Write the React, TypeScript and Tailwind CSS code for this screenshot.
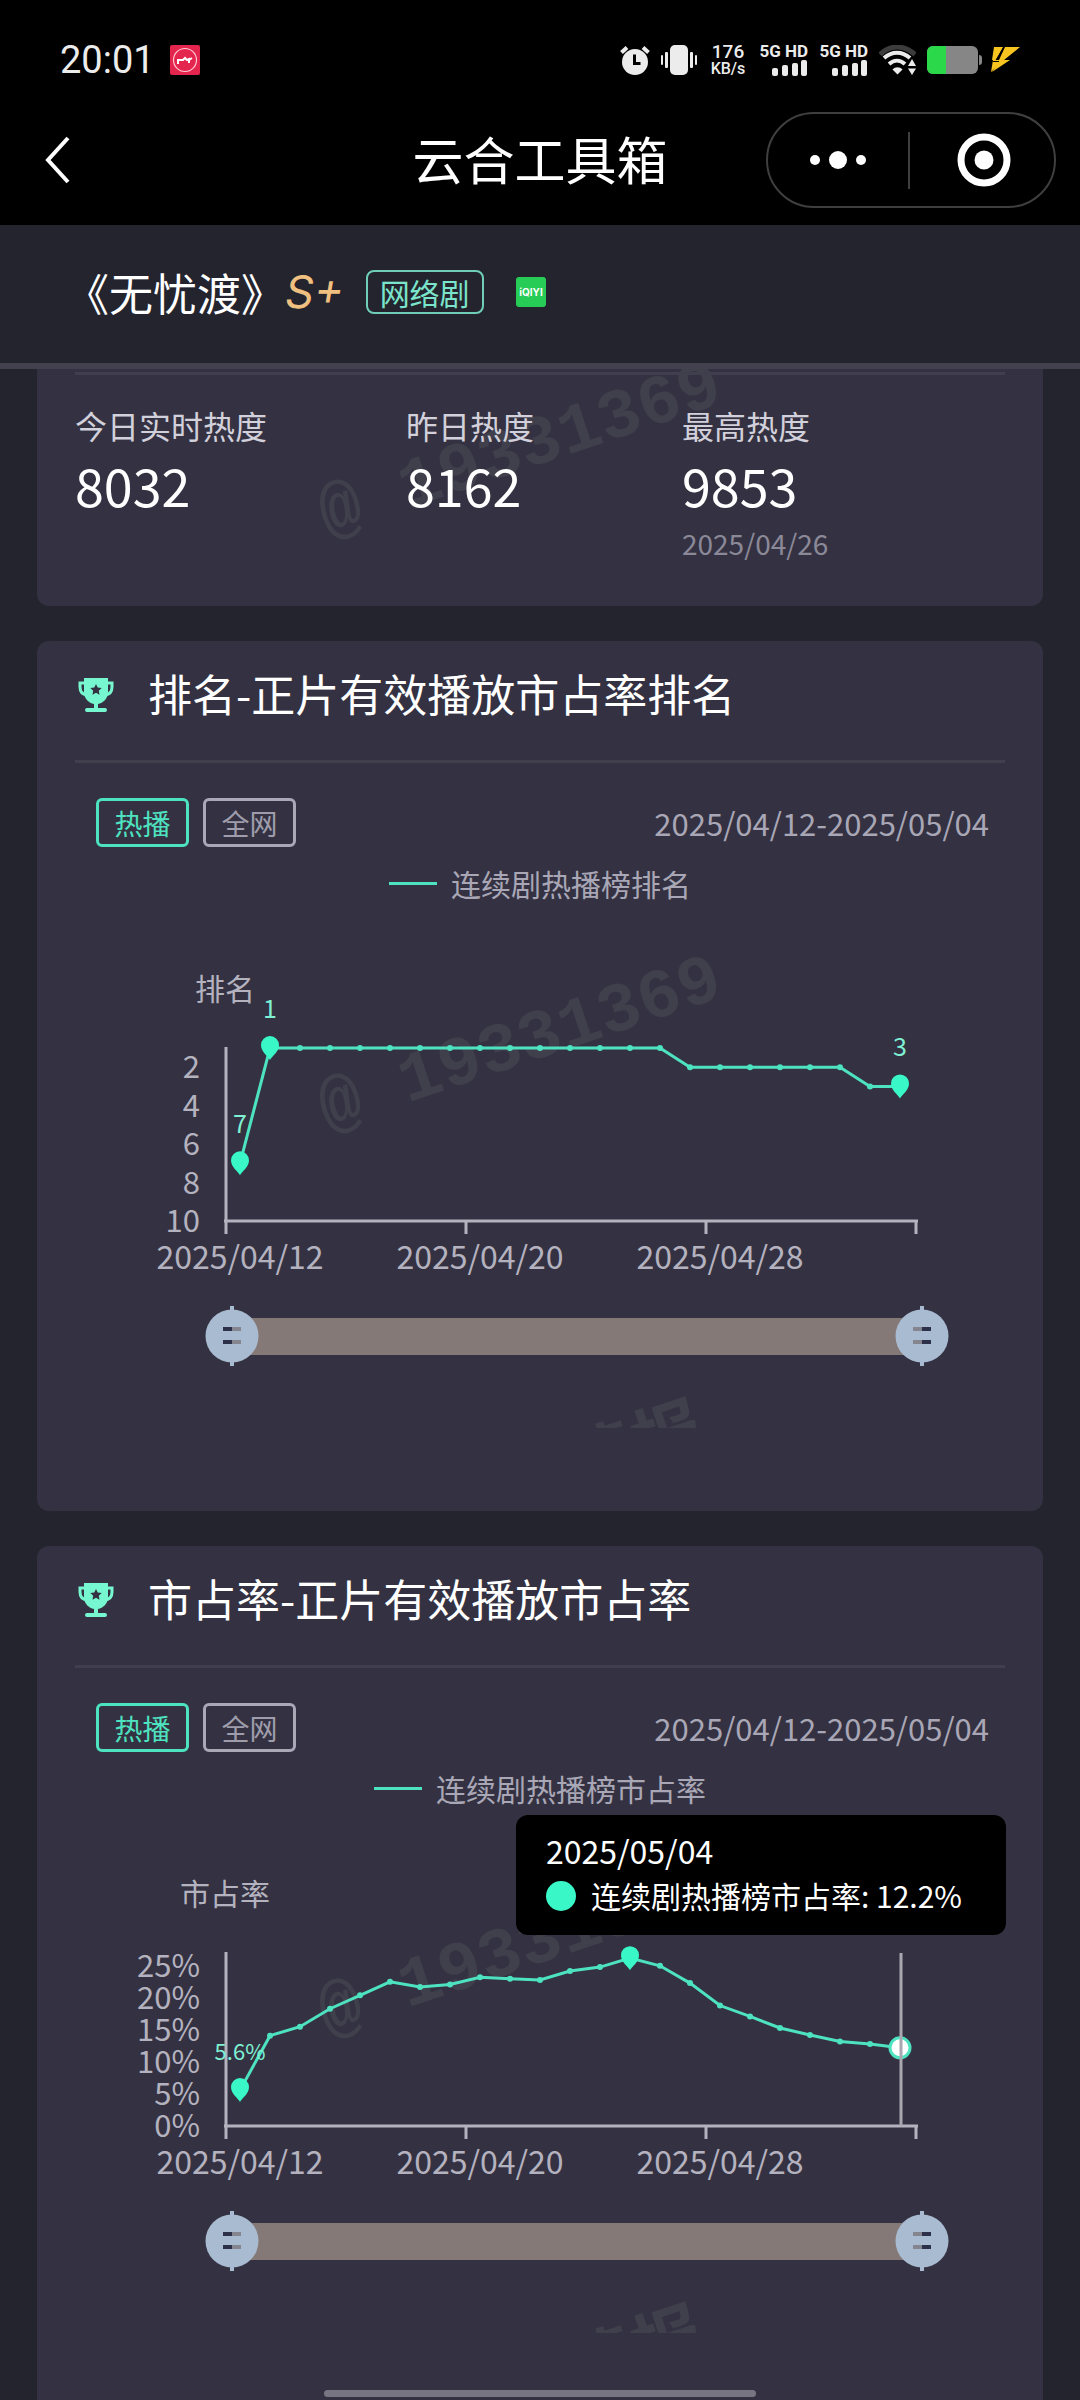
import { clsx } from "clsx";
import type { ReactNode } from "react";

type TPin = {
  index: number;
  label?: string;
};

type TLineChart = {
  name: string;
  unit: string;
  values: number[];
  ticks: { value: number; label: string }[];
  min: number;
  max: number;
  pins: TPin[];
  pinLabelSize: number;
  activeIndex?: number;
};

const SHARE = [
  5.6, 14.1, 15.5, 18.3, 20.4, 22.5, 21.7, 22.1, 23.2, 23, 22.8, 24.2, 24.8,
  26.2, 25, 22.3, 18.8, 17.1, 15.3, 14.2, 13.2, 12.8, 12.2,
];

const RANK = [
  7, 1, 1, 1, 1, 1, 1, 1, 1, 1, 1, 1, 1, 1, 1, 2, 2, 2, 2, 2, 2, 3, 3,
];

const STATS = [
  { label: "今日实时热度", value: "8032" },
  { label: "昨日热度", value: "8162" },
  { label: "最高热度", value: "9853", date: "2025/04/26" },
];

const DATES = [
  { index: 0, label: "2025/04/12" },
  { index: 8, label: "2025/04/20" },
  { index: 16, label: "2025/04/28" },
];

const PLOT = { left: 151, right: 841, top: 142, bottom: 315, step: 30 };

const SignalBars = () => (
  <svg width="36" height="16" viewBox="0 0 36 16" fill="#ececec">
    <rect x="0" y="8" width="6" height="8" rx="2" />
    <rect x="10" y="5" width="6" height="11" rx="2" />
    <rect x="20" y="3" width="6" height="13" rx="2" />
    <rect x="29" y="0" width="6" height="16" rx="2" />
  </svg>
);

const Signal = () => (
  <div className="flex w-[49px] flex-col items-end">
    <span className="text-[17px] leading-[17px] font-bold whitespace-nowrap">
      5G HD
    </span>
    <SignalBars />
  </div>
);

const StatusBar = () => (
  <div className="flex h-[95px] items-center justify-between px-[60px] pt-6 font-['Roboto',sans-serif] text-[#ececec]">
    <div className="flex items-center gap-[15px]">
      <span className="text-[38px] leading-[44px]">20:01</span>
      <svg width="30" height="30" viewBox="0 0 30 30" fill="none">
        <rect width="30" height="30" rx="2" fill="#e4254d" />
        <circle cx="15" cy="15" r="11.5" stroke="#ffc9d4" strokeWidth="1.2" />
        <path
          d="M8 19v-5M8 15h5l2-2 2 2 2-1v4M19 15l3-2"
          stroke="#fff"
          strokeWidth="2"
        />
      </svg>
    </div>
    <div className="flex items-center gap-[11px]">
      <svg width="30" height="30" viewBox="0 0 30 30" fill="none">
        <circle cx="15" cy="17" r="13" fill="#ececec" />
        <path
          d="M1.500 7.500 7 2.500M28.500 7.500 23 2.500"
          stroke="#ececec"
          strokeWidth="4"
        />
        <path d="M14.500 9.500v9h6" stroke="#000" strokeWidth="3" />
      </svg>
      <svg width="36" height="30" viewBox="0 0 36 30" fill="#ececec">
        <rect x="9" y="0" width="18" height="30" rx="5" />
        <rect x="4" y="7" width="3" height="16" rx="1" />
        <rect x="0" y="10" width="2" height="10" rx="1" />
        <rect x="29" y="7" width="3" height="16" rx="1" />
        <rect x="34" y="10" width="2" height="10" rx="1" />
      </svg>
      <div className="flex w-10 flex-col items-center font-medium">
        <span className="text-[19px] leading-[17px]">176</span>
        <span className="text-[16px] leading-[17px]">KB/s</span>
      </div>
      <Signal />
      <Signal />
      <svg width="37" height="30" viewBox="0 0 37 30" fill="none">
        <path
          d="M1 9.500C11-.5 25-.5 36 9.500"
          stroke="#3c3c3c"
          strokeWidth="5"
        />
        <path d="M5 13c8-7 18-7 26 0" stroke="#ececec" strokeWidth="4" />
        <path d="M10 19c5-4.500 11-4.500 16 0" stroke="#ececec" strokeWidth="4" />
        <path d="M13.500 24.500c3-3 7-3 10 0l-5 5z" fill="#ececec" />
        <path d="M33 14l4 7h-8zM33 30l-4-6.500h8z" fill="#ececec" />
      </svg>
      <div className="flex items-center gap-2">
        <svg width="55" height="28" viewBox="0 0 55 28">
          <rect width="51" height="28" rx="6" fill="#868686" />
          <path
            d="M6 0h13v28H6a6 6 0 0 1-6-6V6a6 6 0 0 1 6-6z"
            fill="#2bd84a"
          />
          <path d="M52 9a3 3 0 0 1 3 3v4a3 3 0 0 1-3 3z" fill="#868686" />
        </svg>
        <svg width="30" height="26" viewBox="0 0 30 26" fill="#f8c520">
          <path d="M4 0h9L6 13h8L1 25l2-12H2z" />
          <path d="M15 0h15L14 13h6L2 25l9-12H9z" />
          <path d="M14 0 6 13M3 14.500h6" stroke="#000" strokeWidth="1" />
        </svg>
      </div>
    </div>
  </div>
);

const NavBar = () => (
  <div className="relative flex h-[130px] items-center justify-between pr-6 pl-[34px]">
    <button type="button" aria-label="返回" className="p-2">
      <svg width="32" height="48" viewBox="0 0 32 48" fill="none">
        <path d="M26 2 6 24l20 22" stroke="#fff" strokeWidth="4" />
      </svg>
    </button>
    <h1 className="absolute left-1/2 -translate-x-1/2 pb-1 text-[51px] leading-[60px] text-white">
      云合工具箱
    </h1>
    <div className="flex h-24 w-[290px] items-center rounded-full border-2 border-[#3f3f3f]">
      <button
        type="button"
        aria-label="更多"
        className="flex flex-1 justify-center"
      >
        <svg width="58" height="20" viewBox="0 0 58 20" fill="#fff">
          <circle cx="6" cy="10" r="5" />
          <circle cx="29" cy="10" r="9" />
          <circle cx="52" cy="10" r="5" />
        </svg>
      </button>
      <div className="h-[57px] w-[2px] bg-[#3f3f3f]" />
      <button
        type="button"
        aria-label="关闭"
        className="flex flex-1 justify-center pl-1"
      >
        <svg width="54" height="54" viewBox="0 0 54 54" fill="none">
          <circle cx="27" cy="27" r="23" stroke="#fff" strokeWidth="7" />
          <circle cx="27" cy="27" r="9.500" fill="#fff" />
        </svg>
      </button>
    </div>
  </div>
);

const ShowHeader = () => (
  <div className="flex h-36 items-center border-b-[6px] border-[#42414d] bg-[#24242e] pb-1 pl-[65px]">
    <span className="text-[44px] leading-[60px] text-white">《无忧渡》</span>
    <span className="font-['Inter',sans-serif] text-[45px] leading-[60px] text-[#f0c080] italic">
      S+
    </span>
    <span className="ml-[22px] rounded-lg border-2 border-[#6fcdb8] px-3 text-[30px] leading-10 text-[#7be5cb]">
      网络剧
    </span>
    <svg className="ml-8" width="30" height="30" viewBox="0 0 30 30">
      <rect width="30" height="30" rx="3" fill="#27cc57" />
      <text
        x="15"
        y="19"
        textAnchor="middle"
        fill="#fff"
        className="font-['Inter',sans-serif] text-[10px] font-bold"
      >
        iQIYI
      </text>
    </svg>
  </div>
);

const Watermark = ({ className }: { className?: string }) => (
  <div
    aria-hidden="true"
    className={clsx(
      "absolute left-[262px] -z-10 h-[500px] w-[440px] overflow-hidden",
      className
    )}
  >
    <svg width="440" height="500" viewBox="0 0 440 500" fill="#403f4c">
      <text
        transform="translate(220 113) rotate(-18.600)"
        x="0"
        y="23"
        textAnchor="middle"
        className="font-['Liberation_Mono',monospace] text-[70px] font-bold"
      >
        @ 19331369
      </text>
      <text
        transform="translate(368 506) rotate(-18.600)"
        x="35"
        y="27"
        textAnchor="end"
        className="text-[70px] font-bold"
      >
        云合情报
      </text>
    </svg>
  </div>
);

const Card = ({
  className,
  children,
}: {
  className?: string;
  children: ReactNode;
}) => (
  <section
    className={clsx("relative isolate shrink-0 bg-[#343242] px-[38px]", className)}
  >
    {children}
  </section>
);

const TrophyIcon = () => (
  <svg width="38" height="36" viewBox="0 0 38 36" fill="none">
    <path
      d="M8 6H3v4c0 5 3 7.500 7 8M30 6h5v4c0 5-3 7.500-7 8"
      stroke="#76f7cf"
      strokeWidth="3"
    />
    <path
      d="M7 1h24v14c0 7-5 11-10 12v4h7a2 2 0 0 1 0 4H10a2 2 0 0 1 0-4h7v-4C12 26 7 22 7 15z"
      fill="#76f7cf"
    />
    <path
      d="m19 7 1.700 3.600 4 .5-2.900 2.700.7 3.900-3.500-1.900-3.500 1.900.7-3.900-2.900-2.700 4-.5z"
      fill="#343242"
    />
  </svg>
);

const Pin = ({ x, y }: { x: number; y: number }) => (
  <path
    transform={`translate(${x} ${y})`}
    d="M0 12C-2 8-9 4-9-3a9 9 0 0 1 18 0C9 4 2 8 0 12z"
    fill="#3af7c8"
  />
);

const LineChart = ({
  name,
  unit,
  values,
  ticks,
  min,
  max,
  pins,
  pinLabelSize,
  activeIndex,
}: TLineChart) => {
  const px = (index: number) => PLOT.left + 14 + index * PLOT.step;
  const py = (value: number) =>
    PLOT.bottom - ((value - min) / (max - min)) * (PLOT.bottom - PLOT.top);

  return (
    <svg
      viewBox="0 0 930 384"
      className="block h-auto w-full"
      role="img"
      aria-label={name}
    >
      <g fill="#b4b2bf">
        <text x="150" y="94" textAnchor="middle" className="text-[30px]">
          {unit}
        </text>
        {ticks.map((tick) => (
          <text
            key={tick.label}
            x="125"
            y={py(tick.value) + 11}
            textAnchor="end"
            className="text-[31px]"
          >
            {tick.label}
          </text>
        ))}
        {DATES.map((date) => (
          <text
            key={date.label}
            x={px(date.index)}
            y="363"
            textAnchor="middle"
            className="text-[32px]"
          >
            {date.label}
          </text>
        ))}
      </g>
      <path
        d="M151 141v187M149 315h694M391 315v13M631 315v13M841 315v13"
        stroke="#b4b2bf"
        strokeWidth="3"
        fill="none"
      />
      <polyline
        points={values.map((value, i) => `${px(i)},${py(value)}`).join(" ")}
        stroke="#4ee3c0"
        strokeWidth="3"
        fill="none"
      />
      {values.map((value, i) => (
        <circle key={i} cx={px(i)} cy={py(value)} r="3" fill="#4ee3c0" />
      ))}
      {pins.map((pin) => (
        <g key={pin.index}>
          <Pin x={px(pin.index)} y={py(values[pin.index])} />
          {pin.label && (
            <text
              x={px(pin.index)}
              y={py(values[pin.index]) - 30}
              textAnchor="middle"
              fontSize={pinLabelSize}
              fill="#7ff0d3"
            >
              {pin.label}
            </text>
          )}
        </g>
      ))}
      {activeIndex !== undefined && (
        <g>
          <circle
            cx={px(activeIndex)}
            cy={py(values[activeIndex])}
            r="10"
            fill="#fff"
            stroke="#4ee3c0"
            strokeWidth="3"
          />
          <path
            d={`M${px(activeIndex) + 1} 142v173`}
            stroke="#a9a8b0"
            strokeWidth="3"
          />
        </g>
      )}
    </svg>
  );
};

const Handle = ({ end }: { end?: boolean }) => (
  <svg
    width="54"
    height="60"
    viewBox="0 0 54 60"
    className={clsx("absolute top-0", end ? "-right-7" : "-left-7")}
  >
    <path d="M27 0v60" stroke="#a9bbd0" strokeWidth="4" />
    <circle cx="27" cy="30" r="26.500" fill="#a9bbd0" />
    <path
      d="M18 23h9M18 36h9"
      stroke={end ? "#85858f" : "#2c3048"}
      strokeWidth="4"
    />
    <path
      d="M27 23h9M27 36h9"
      stroke={end ? "#2c3048" : "#85858f"}
      strokeWidth="4"
    />
  </svg>
);

const RangeSlider = ({ name }: { name: string }) => (
  <div className="relative mt-4 mr-[9%] ml-[17%] flex h-[60px] items-center">
    <div className="h-[37px] w-full bg-[#857977]" />
    <Handle />
    <Handle end />
    <input
      type="range"
      aria-label={`${name} 开始日期`}
      min={0}
      max={22}
      defaultValue={0}
      className="absolute inset-y-0 left-0 w-1/2 cursor-pointer opacity-0"
    />
    <input
      type="range"
      aria-label={`${name} 结束日期`}
      min={0}
      max={22}
      defaultValue={22}
      className="absolute inset-y-0 right-0 w-1/2 cursor-pointer opacity-0"
    />
  </div>
);

const ChartCard = ({
  title,
  chart,
  tooltip,
}: {
  title: string;
  chart: TLineChart;
  tooltip?: { date: string; text: string };
}) => (
  <Card className="rounded-xl pb-[145px]">
    <Watermark className="top-[287px]" />
    <div className="flex h-[122px] items-center gap-[33px] border-b-[3px] border-[#413f4e] pb-3 pl-[2px]">
      <TrophyIcon />
      <h2 className="pb-1 text-[44px] leading-[60px] text-white">{title}</h2>
    </div>
    <div className="mt-[35px] flex h-[49px] items-center justify-between pr-4 pl-[21px]">
      <div className="flex gap-[14px]">
        <button
          type="button"
          aria-pressed="true"
          className="h-[49px] w-[93px] rounded-md border-[3px] border-[#4ee3c0] text-[28px] leading-10 text-[#4ee3c0]"
        >
          热播
        </button>
        <button
          type="button"
          aria-pressed="false"
          className="h-[49px] w-[93px] rounded-md border-[3px] border-[#aaa8b6] text-[28px] leading-10 text-[#9f9dac]"
        >
          全网
        </button>
      </div>
      <span className="text-[31px] leading-[45px] text-[#a9a7b6]">
        2025/04/12-2025/05/04
      </span>
    </div>
    <div className="mt-[14px] flex items-center justify-center gap-[14px]">
      <div className="h-[3px] w-12 bg-[#4ee3c0]" />
      <span className="text-[30px] leading-[45px] text-[#a9a7b6]">
        {chart.name}
      </span>
    </div>
    <LineChart {...chart} />
    <RangeSlider name={chart.name} />
    {tooltip && (
      <div
        role="tooltip"
        className="absolute top-[269px] right-[37px] h-[120px] w-[490px] rounded-xl bg-black px-[30px] pt-[13px] leading-[45px] text-white"
      >
        <p className="text-[32px]">{tooltip.date}</p>
        <p className="flex items-center gap-[15px] text-[30px]">
          <span className="size-[30px] rounded-full bg-[#3af7c8]" />
          {tooltip.text}
        </p>
      </div>
    )}
  </Card>
);

const App = () => {
  return (
    <div className="relative flex h-screen flex-col overflow-hidden bg-[#24242e] font-['Noto_Sans_CJK_SC',sans-serif]">
      <header className="shrink-0 bg-black">
        <StatusBar />
        <NavBar />
        <ShowHeader />
      </header>
      <main className="flex min-h-0 flex-1 flex-col gap-[35px] overflow-y-auto px-[37px] [scrollbar-width:none]">
        <Card className="overflow-hidden rounded-b-xl pt-[3px] pb-[41px]">
          <Watermark className="-top-[35px]" />
          <div className="h-[3px] bg-[#413f4e]" />
          <div className="mt-7 grid grid-cols-[331fr_276fr_323fr]">
            {STATS.map((stat) => (
              <div key={stat.label}>
                <p className="text-[32px] leading-[44px] text-[#d2d0da]">
                  {stat.label}
                </p>
                <p className="mt-2 text-[52px] leading-[60px] text-white">
                  {stat.value}
                </p>
                {stat.date && (
                  <p className="mt-[6px] text-[28px] leading-[44px] text-[#8b8998]">
                    {stat.date}
                  </p>
                )}
              </div>
            ))}
          </div>
        </Card>
        <ChartCard
          title="排名-正片有效播放市占率排名"
          chart={{
            name: "连续剧热播榜排名",
            unit: "排名",
            values: RANK,
            ticks: [2, 4, 6, 8, 10].map((value) => ({
              value,
              label: String(value),
            })),
            min: 10,
            max: 1,
            pins: [
              { index: 0, label: "7" },
              { index: 1, label: "1" },
              { index: 22, label: "3" },
            ],
            pinLabelSize: 25,
          }}
        />
        <ChartCard
          title="市占率-正片有效播放市占率"
          chart={{
            name: "连续剧热播榜市占率",
            unit: "市占率",
            values: SHARE,
            ticks: [25, 20, 15, 10, 5, 0].map((value) => ({
              value,
              label: `${value}%`,
            })),
            min: 0,
            max: 27,
            pins: [{ index: 0, label: "5.6%" }, { index: 13 }],
            pinLabelSize: 22,
            activeIndex: 22,
          }}
          tooltip={{ date: "2025/05/04", text: "连续剧热播榜市占率: 12.2%" }}
        />
      </main>
      <div className="absolute bottom-[3px] left-1/2 h-[7px] w-[40%] -translate-x-1/2 rounded-full bg-[#777581]" />
    </div>
  );
};

export default App;
